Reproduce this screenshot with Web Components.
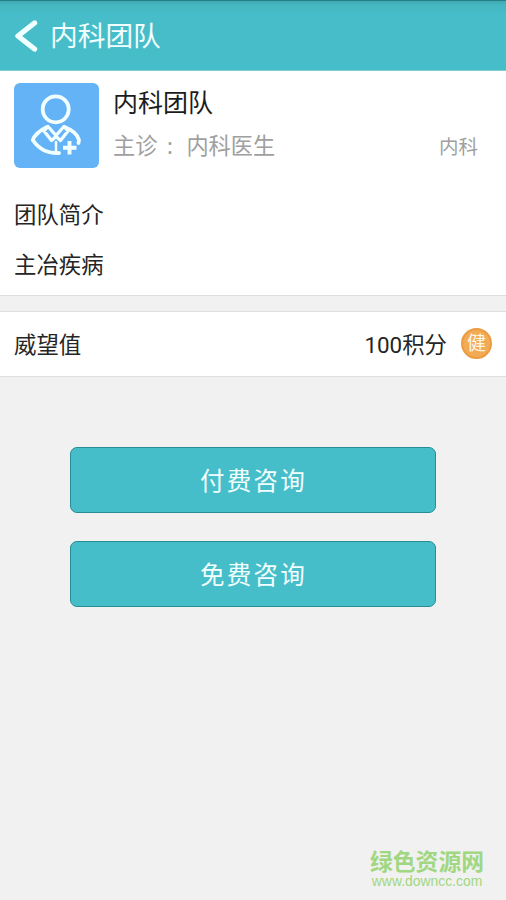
<!DOCTYPE html>
<html lang="zh-CN">
<head>
<meta charset="utf-8">
<title>内科团队</title>
<style>
html,body{margin:0;height:100%;overflow:hidden;background:#f1f1f1}
body{font-family:"Noto Sans","Noto Sans CJK SC",sans-serif;color:#222}
</style>
</head>
<body>
<team-page></team-page>
<script>
function define(name, html) {
  const t = document.createElement('template');
  t.innerHTML = html;
  customElements.define(name, class extends HTMLElement {
    constructor() {
      super();
      this.attachShadow({ mode: 'open' }).append(t.content.cloneNode(true));
    }
  });
}

define('app-header', `<style>
:host{display:flex;align-items:center;height:71px;box-sizing:border-box;padding:1px 0 0 14px;color:#f2ffff;
background:linear-gradient(#267f85 0,#267f85 1px,#3fa9b1 1px,#45b6bf 5px,#46bdc8 14px,#46bec9 70px,#7fcdd5 70px)}
svg{width:24px;height:36px;flex:none}
h1{margin:0 0 2px 12px;font-size:27.7px;line-height:40px;font-weight:400}
</style><svg viewBox="0 0 24 36"><path d="M20.500 5 4 18l16.500 13" fill="none" stroke="#f0ffff" stroke-width="5.400" stroke-linecap="round" stroke-linejoin="round"/></svg><h1><slot></slot></h1>`);

define('doctor-avatar', `<style>
:host{display:block;width:84.500px;height:84.500px;border-radius:6px;background:#64b3f6;flex:none}
svg{display:block}
</style><svg width="84" height="84" viewBox="0 0 84 84" fill="none" stroke="#f2ffff" stroke-width="3.8" stroke-linejoin="round" stroke-linecap="round">
<circle cx="41.7" cy="26.3" r="13"/>
<path d="M33 44C26 47.500 20.500 52 18.800 57 24 65 32 70.500 45 70"/>
<path d="M50.500 44C57 46.500 63.500 51 65 57l-.5 3"/>
<path d="M34 43.500l-4 4.500 7.500 9.500 4.500-4 4.500 4 7.500-9.500-4-4.500-8 9z" stroke-width="3.300"/>
<path d="M42 59v10" stroke-width="2.500"/>
<path d="M55.500 58v13.500M49 64.700h13.500" stroke-width="3.900" stroke-linecap="butt"/></svg>`);

define('team-profile', `<style>
:host{display:flex;height:84px;padding:12px 28px 0 14px}
.info{flex:1;margin-left:14.500px}
.name{font-size:25px;line-height:36px;margin-top:1px;color:#1c1c1c}
.sub{display:flex;justify-content:space-between;align-items:center;margin-top:9px;line-height:32px;font-size:22.2px;color:#a0a0a0}
.lead{display:flex}.colon{width:25px;padding-right:4px;text-align:center;font-family:"Noto Sans",sans-serif}
.dept{font-size:19.500px;padding-top:2px}
</style><doctor-avatar></doctor-avatar><div class="info"><div class="name"><slot name="name"></slot></div>
<div class="sub"><div class="lead"><span>主诊</span><span class="colon">:</span><slot name="doctor"></slot></div><div class="dept"><slot name="dept"></slot></div></div></div>`);

define('section-label', `<style>
:host{display:flex;align-items:center;height:49.500px;padding-left:14px;font-size:22.400px;color:#252525}
</style><slot></slot>`);

define('point-row', `<style>
:host{display:flex;align-items:center;height:64px;padding:0 14px;font-size:22.400px;color:#252525;background:#fff;border:solid #dedede;border-width:1px 0}
.label{margin-bottom:2px}
.value{margin:0 14px 2px auto;font-family:Roboto,"Noto Sans CJK SC",sans-serif}
.coin{display:flex;align-items:center;justify-content:center;width:27px;height:27px;border:2px solid #eb9c42;border-radius:50%;background:#f3aa55;color:#fff8e8;font-size:19px;line-height:27px;margin-top:-2px}
</style><span class="label"><slot></slot></span><span class="value"><slot name="value"></slot></span><span class="coin">健</span>`);

define('action-button', `<style>
:host{display:block}
button{display:flex;width:100%;height:66px;align-items:center;justify-content:center;padding:0 0 2px 1px;border:1.500px solid #268d94;border-radius:7px;background:#46bec9;color:#f2ffff;font:inherit;font-size:24.500px;letter-spacing:2.300px}
</style><button><slot></slot></button>`);

define('site-mark', `<style>
:host{position:absolute;right:22px;bottom:11px;text-align:center;color:#a2d781}
b{display:block;height:25px;font:700 22.800px/25px "Noto Sans CJK SC",sans-serif}
span{display:block;font:13.900px/16px "Liberation Sans",sans-serif}
</style><b>绿色资源网</b><span>www.downcc.com</span>`);

define('team-page', `<style>
:host{display:block;position:relative;width:100%;height:900px;background:#f1f1f1}
.card{height:224px;background:#fff;border-bottom:1px solid #dedede;margin-bottom:15px}
.labels{padding-top:22px}
.actions{display:flex;flex-direction:column;gap:28px;padding:70px 70px 0}
</style>
<app-header>内科团队</app-header>
<div class="card"><team-profile><span slot="name">内科团队</span><span slot="doctor">内科医生</span><span slot="dept">内科</span></team-profile>
<div class="labels"><section-label>团队简介</section-label><section-label>主冶疾病</section-label></div></div>
<point-row>威望值<span slot="value">100积分</span></point-row>
<div class="actions"><action-button>付费咨询</action-button><action-button>免费咨询</action-button></div>
<site-mark></site-mark>`);
</script>
</body>
</html>
